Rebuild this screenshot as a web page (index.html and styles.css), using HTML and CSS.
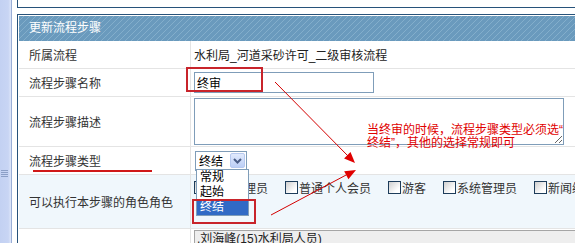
FILE: index.html
```html
<!DOCTYPE html>
<html>
<head>
    <meta charset="utf-8">
    <title>更新流程步骤</title>
    <link rel="stylesheet" href="styles.css">
</head>
<body>
<div class="page">
    <div class="sidebar">
        <svg class="grip" width="7" height="8" viewBox="0 0 7 8">
            <path d="M0 1.5h7M0 3.5h7M0 5.5h7M0 7.5h7" stroke="#8c9fc6" stroke-width="1"/>
        </svg>
    </div>
    <div class="main">
        <div class="topbox"></div>
        <div class="panel">
            <div class="panel-head">更新流程步骤</div>
            <div class="row row-s">
                <div class="cell-label">所属流程</div>
                <div class="cell-value">水利局_河道采砂许可_二级审核流程</div>
            </div>
            <div class="row row-s">
                <div class="cell-label">流程步骤名称</div>
                <div class="cell-value"><input type="text" class="text-input" value="终审"></div>
            </div>
            <div class="row row-m">
                <div class="cell-label">流程步骤描述</div>
                <div class="cell-value"><textarea class="text-area"></textarea></div>
            </div>
            <div class="row row-s">
                <div class="cell-label">流程步骤类型</div>
                <div class="cell-value">
                    <div class="select">
                        <span>终结</span>
                        <span class="select-btn">
                            <svg width="9" height="6" viewBox="0 0 9 6"><path d="M1 1l3.5 3.5L8 1" fill="none" stroke="#4a5d86" stroke-width="2"/></svg>
                        </span>
                        <div class="options">
                            <div class="option">常规</div>
                            <div class="option">起始</div>
                            <div class="option selected">终结</div>
                        </div>
                    </div>
                </div>
            </div>
            <div class="row row-roles">
                <div class="cell-label">可以执行本步骤的角色角色</div>
                <div class="cell-value roles">
                    <label class="role"><span class="box"></span>部门管理员</label>
                    <label class="role"><span class="box"></span>普通个人会员</label>
                    <label class="role"><span class="box"></span>游客</label>
                    <label class="role"><span class="box"></span>系统管理员</label>
                    <label class="role"><span class="box"></span>新闻编辑员</label>
                </div>
            </div>
            <div class="row row-last">
                <div class="cell-label"></div>
                <div class="cell-value last">
                    <div class="readonly">,刘海峰(15)水利局人员)</div>
                </div>
            </div>
        </div>
    </div>

    <svg class="marks" width="575" height="243" viewBox="0 0 575 243">
        <rect x="187" y="68" width="75" height="23" fill="none" stroke="#c8242b" stroke-width="2"/>
        <rect x="193" y="200" width="62" height="23" fill="none" stroke="#c8242b" stroke-width="2"/>
        <line x1="33" y1="171" x2="152" y2="171" stroke="#d01818" stroke-width="2"/>
        <line x1="275" y1="82" x2="349" y2="157" stroke="#d40000" stroke-width="1"/>
        <polygon points="355,163 350.5,152 344.1,158.4" fill="#e00000"/>
        <line x1="271" y1="215" x2="348" y2="174" stroke="#d40000" stroke-width="1"/>
        <polygon points="356,170 348.4,179.2 344.2,171.2" fill="#e00000"/>
    </svg>
    <div class="note">当终审的时候，流程步骤类型必须选“<br>终结”，其他的选择常规即可</div>
</div>
</body>
</html>
```

FILE: styles.css
```css
body {
    margin: 0;
    overflow: hidden;
    font-family: "Liberation Sans", "Noto Sans CJK SC", sans-serif;
    font-size: 12px;
    color: #333;
    background: #fff;
}

.page {
    position: relative;
    display: flex;
    width: 575px;
    height: 243px;
    overflow: hidden;
}

.sidebar {
    flex: none;
    width: 11px;
    padding-top: 169px;
    background: linear-gradient(to right, #c3d1f2 0, #c8d5f4 75%, #dfe7f9 100%);
    border-right: 1px solid #9aaed6;
}

.grip {
    display: block;
    margin-left: 1px;
}

.main {
    flex: none;
    width: 640px;
    padding-left: 5px;
}

.topbox {
    height: 7px;
    border-left: 1px solid #27527a;
    border-bottom: 1px solid #27527a;
}

.panel {
    margin-top: 6px;
    padding: 1px;
    border: 1px solid #27527a;
}

.panel-head {
    height: 25px;
    line-height: 25px;
    padding-left: 10px;
    color: #fff;
    background: repeating-linear-gradient(135deg, #6a9abd 0, #6a9abd 3.2px, #83aecb 3.2px, #83aecb 4.24px);
}

.row {
    display: grid;
    grid-template-columns: 172px 1fr;
    border-bottom: 1px solid #e4e4e4;
}

.row-s {
    height: 27px;
}

.row-m {
    height: 49px;
}

.row-roles {
    height: 53px;
    background: #f0f7fc;
}

.row-last {
    height: 20px;
}

.cell-label {
    display: flex;
    align-items: center;
    padding-left: 10px;
    border-right: 1px solid #e4e4e4;
    box-sizing: border-box;
    color: #333;
}

.cell-value {
    display: flex;
    align-items: center;
    padding-left: 3px;
    color: #222;
    white-space: nowrap;
}

.text-input {
    width: 180px;
    height: 21px;
    margin: 0;
    padding: 0 2px;
    border: 1px solid #7f9db9;
    box-sizing: border-box;
    font-family: "Liberation Sans", "Noto Sans CJK SC", sans-serif;
    font-size: 12px;
    color: #000;
    background: #fff;
}

.text-area {
    width: 370px;
    height: 47px;
    margin: 0;
    padding: 2px;
    border: 1px solid #7f9db9;
    box-sizing: border-box;
    font-family: "Liberation Sans", "Noto Sans CJK SC", sans-serif;
    font-size: 12px;
    resize: both;
}

.select {
    position: relative;
    display: flex;
    align-items: center;
    width: 52px;
    height: 20px;
    margin-left: 1px;
    padding-left: 3px;
    border: 1px solid #7f9db9;
    box-sizing: border-box;
    background: #fff;
    color: #000;
}

.select-btn {
    display: flex;
    align-items: center;
    justify-content: center;
    width: 15px;
    height: 15px;
    margin-left: auto;
    margin-right: 1px;
    box-sizing: border-box;
    border: 1px solid #b6c9ef;
    border-radius: 2px;
    background: linear-gradient(#e1eafd, #bccff6);
}

.options {
    position: absolute;
    left: 0;
    top: 17px;
    width: 51px;
    border: 1px solid #7f9db9;
    background: #fff;
    z-index: 2;
}

.option {
    height: 15px;
    line-height: 15px;
    padding-left: 3px;
    color: #000;
}

.option.selected {
    background: #316ac5;
    color: #fff;
}

.roles {
    align-items: flex-start;
    padding-top: 4px;
    overflow: hidden;
}

.role {
    display: flex;
    align-items: center;
    margin-right: 17px;
    color: #333;
}

.box {
    display: inline-block;
    width: 13px;
    height: 13px;
    margin-right: 1px;
    box-sizing: border-box;
    border: 1px solid #1d3c5a;
    background: linear-gradient(135deg, #cfcfcf, #fff 75%);
}

.last {
    align-items: stretch;
    padding-top: 1px;
}

.readonly {
    flex: 1;
    padding-left: 2px;
    line-height: 16px;
    border-top: 1px solid #a5a5a5;
    border-left: 1px solid #a5a5a5;
    background: #eeeeee;
    color: #222;
}

.marks {
    position: absolute;
    left: 0;
    top: 0;
    pointer-events: none;
    z-index: 3;
}

.note {
    position: absolute;
    left: 367px;
    top: 124px;
    font-size: 12px;
    line-height: 13px;
    color: #e00000;
    white-space: nowrap;
    z-index: 3;
}
```
